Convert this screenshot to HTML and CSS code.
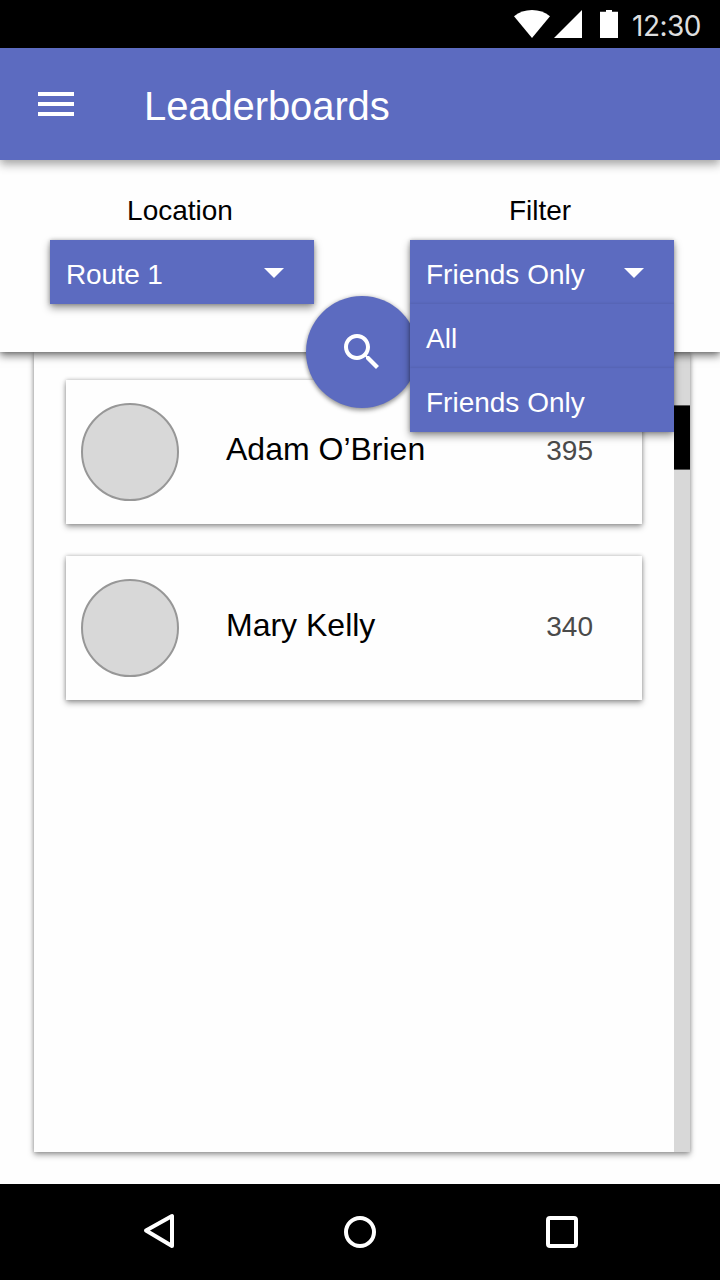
FILE: index.html
```html
<!DOCTYPE html>
<html lang="en">
<head>
<meta charset="utf-8">
<title>Leaderboards</title>
<link rel="stylesheet" href="styles.css">
</head>
<body>
<div class="screen">
  <div class="status-bar">
    <svg class="status-icons" width="104" height="28" viewBox="0 0 104 28" fill="#fff">
      <path d="M18 28 0 6.2C5 2.2 11.2 0 18 0s13 2.2 18 6.2z"/>
      <path d="M40 28 68 0v28z"/>
      <path d="M86 1.8h6V0h6v1.8h6V28H86z"/>
    </svg>
    <span class="clock">12:30</span>
  </div>

  <header class="app-bar">
    <svg width="48" height="48" viewBox="0 0 24 24" fill="#fff"><path d="M3 18h18v-2H3v2zm0-5h18v-2H3v2zm0-7v2h18V6H3z"/></svg>
    <h1 class="title">Leaderboards</h1>
  </header>

  <section class="filters">
    <div class="field">
      <div class="label">Location</div>
      <div class="select">
        <div class="option"><span class="narrow">Route 1</span>
          <svg width="48" height="48" viewBox="0 0 24 24" fill="#fff"><path d="M7 10l5 5 5-5z"/></svg>
        </div>
      </div>
    </div>
    <div class="field">
      <div class="label">Filter</div>
      <div class="select select-open">
        <div class="option">Friends Only
          <svg width="48" height="48" viewBox="0 0 24 24" fill="#fff"><path d="M7 10l5 5 5-5z"/></svg>
        </div>
        <div class="option">All</div>
        <div class="option">Friends Only</div>
      </div>
    </div>
    <button class="fab" aria-label="Search">
      <svg width="48" height="48" viewBox="0 0 24 24" fill="#fff"><path d="M15.5 14h-.79l-.28-.27C15.41 12.59 16 11.11 16 9.5 16 5.91 13.09 3 9.5 3S3 5.91 3 9.5 5.91 16 9.5 16c1.61 0 3.09-.59 4.23-1.57l.27.28v.79l5 4.99L20.49 19l-4.99-5zm-6 0C7.01 14 5 11.99 5 9.5S7.01 5 9.5 5 14 7.01 14 9.5 11.99 14 9.5 14z"/></svg>
    </button>
  </section>

  <main class="content">
    <div class="panel">
      <div class="list">
        <article class="card">
          <div class="avatar"></div>
          <div class="name">Adam O’Brien</div>
          <div class="score">395</div>
        </article>
        <article class="card">
          <div class="avatar"></div>
          <div class="name">Mary Kelly</div>
          <div class="score">340</div>
        </article>
      </div>
      <div class="scrollbar"><div class="thumb"></div></div>
    </div>
  </main>

  <nav class="nav-bar">
    <svg width="32" height="36" viewBox="0 0 32 36" fill="none" stroke="#fff" stroke-width="4" stroke-linejoin="round"><path d="M4 17.5 30 3v30z"/></svg>
    <svg width="32" height="32" viewBox="0 0 32 32" fill="none" stroke="#fff" stroke-width="4"><circle cx="16" cy="16" r="14"/></svg>
    <svg width="32" height="32" viewBox="0 0 32 32" fill="none" stroke="#fff" stroke-width="4"><rect x="2" y="2" width="28" height="28" rx="2"/></svg>
  </nav>
</div>
</body>
</html>
```
FILE: styles.css
```css
* { box-sizing: border-box; }
body {
  margin: 0;
  font-family: "Liberation Sans", Arial, sans-serif;
  background: #fefefe;
}
svg { display: block; flex: none; }
.screen {
  width: 720px;
  height: 1280px;
  display: flex;
  flex-direction: column;
  overflow: hidden;
}
.status-bar {
  height: 48px;
  flex: none;
  padding-right: 16px;
  background: #000;
  display: flex;
  align-items: center;
  justify-content: flex-end;
  gap: 14px;
}
.clock {
  width: 72px;
  padding-top: 5px;
  font: 400 28px/41px Inter, sans-serif;
  letter-spacing: -.5px;
  color: #dedede;
  white-space: nowrap;
}
.app-bar {
  position: relative;
  z-index: 3;
  height: 112px;
  flex: none;
  padding: 0 32px;
  background: #5c6bc0;
  display: flex;
  align-items: center;
  gap: 64px;
  box-shadow: 0 5px 9px rgba(0, 0, 0, .3), 0 0 8px rgba(0, 0, 0, .1);
}
.title {
  margin: 0;
  padding-top: 5px;
  font-size: 40px;
  font-weight: 400;
  line-height: 47px;
  letter-spacing: -.1px;
  color: #fff;
}
.filters {
  position: relative;
  z-index: 2;
  height: 192px;
  flex: none;
  padding: 30px 46px 0 50px;
  background: #fefefe;
  display: flex;
  justify-content: space-between;
  align-items: flex-start;
  box-shadow: 0 4px 8px rgba(0, 0, 0, .5), 0 0 4px rgba(0, 0, 0, .24);
}
.field { width: 264px; }
.label {
  height: 50px;
  padding-top: 1px;
  padding-right: 4px;
  font-size: 28px;
  line-height: 40px;
  text-align: center;
  color: #000;
}
.select {
  background: #5c6bc0;
  box-shadow: 0 4px 8px rgba(0, 0, 0, .4), 0 0 4px rgba(0, 0, 0, .24);
}
.select-open {
  position: relative;
  z-index: 2;
}
.option {
  height: 64px;
  padding: 5px 16px 0;
  font-size: 28px;
  line-height: 59px;
  color: #fff;
  display: flex;
  justify-content: space-between;
  align-items: center;
}
.option svg { margin-top: -5px; }
.option + .option { box-shadow: 0 -1px 2px rgba(0, 0, 0, .08); }
.narrow { letter-spacing: -.2px; }
.fab {
  position: absolute;
  left: 306px;
  bottom: -56px;
  width: 112px;
  height: 112px;
  padding: 0;
  border: 0;
  border-radius: 50%;
  background: #5c6bc0;
  display: grid;
  place-items: center;
  box-shadow: 0 3px 4px rgba(0, 0, 0, .3), 0 0 4px rgba(0, 0, 0, .24);
}
.content {
  flex: 1;
  padding: 0 30px 32px 34px;
}
.panel {
  height: 800px;
  background: #fefefe;
  display: flex;
  box-shadow: 0 3px 6px rgba(0, 0, 0, .35), 0 0 4px rgba(0, 0, 0, .24);
}
.list {
  flex: 1;
  padding: 28px 32px;
  display: flex;
  flex-direction: column;
  gap: 32px;
}
.card {
  height: 144px;
  padding: 0 49px 0 15px;
  background: #fefefe;
  display: flex;
  align-items: center;
  box-shadow: 0 3px 6px rgba(0, 0, 0, .35), 0 0 4px rgba(0, 0, 0, .24);
}
.avatar {
  width: 98px;
  height: 98px;
  border: 2px solid #979797;
  border-radius: 50%;
  background: #d8d8d8;
}
.name {
  flex: 1;
  padding: 0 0 6px 47px;
  font-size: 32px;
  color: #000;
}
.score {
  padding-bottom: 3px;
  font-size: 28px;
  color: #4a4a4a;
}
.scrollbar {
  width: 16px;
  padding-top: 53px;
  background: #d8d8d8;
}
.thumb {
  height: 65px;
  border: solid #555;
  border-width: 1px 0;
  background: #000;
}
.nav-bar {
  height: 96px;
  flex: none;
  padding: 0 142px;
  background: #000;
  display: flex;
  align-items: center;
  justify-content: space-between;
}
.nav-bar svg:first-child { margin-top: -2px; }
```
